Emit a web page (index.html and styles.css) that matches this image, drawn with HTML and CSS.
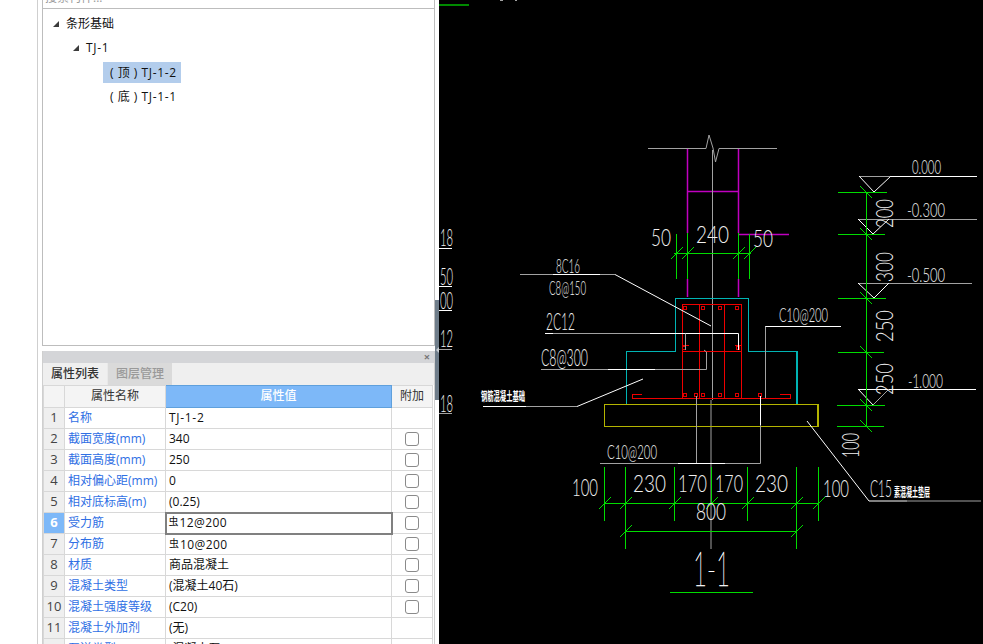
FILE: index.html
```html
<!DOCTYPE html>
<html lang="zh-CN">
<head>
<meta charset="utf-8">
<title>条形基础</title>
<link rel="stylesheet" href="styles.css">
</head>
<body>
<div class="app">
  <div class="gutter"></div>
  <div class="side">
    <section class="tree-pane">
      <div class="search">
        <span class="search-text">搜索构件...</span>
        <svg class="search-icon" width="12" height="12" viewBox="0 0 12 12"><circle cx="5" cy="0" r="4" fill="none" stroke="#3d8fd0" stroke-width="1.5"/><path d="M8 3l3 2" stroke="#3d8fd0" stroke-width="1.5"/></svg>
      </div>
      <ul class="tree">
        <li class="node lvl1"><span class="caret"></span>条形基础</li>
        <li class="node lvl2"><span class="caret"></span><span class="code">TJ-1</span></li>
        <li class="node lvl3"><span class="leaf selected">( 顶 ) <span class="code">TJ-1-2</span></span></li>
        <li class="node lvl3"><span class="leaf">( 底 ) <span class="code">TJ-1-1</span></span></li>
      </ul>
    </section>
    <section class="prop-pane">
      <div class="titlebar"><span class="close">×</span></div>
      <div class="tabs">
        <span class="tab active">属性列表</span>
        <span class="tab">图层管理</span>
      </div>
      <table class="props">
        <colgroup><col class="c-num"><col class="c-name"><col class="c-val"><col class="c-add"></colgroup>
        <thead>
          <tr><th></th><th>属性名称</th><th class="hot">属性值</th><th>附加</th></tr>
        </thead>
        <tbody>
          <tr><td class="num">1</td><td class="name">名称</td><td class="val"><span class="code">TJ-1-2</span></td><td></td></tr>
          <tr><td class="num">2</td><td class="name">截面宽度(mm)</td><td class="val">340</td><td class="add"><span class="check"></span></td></tr>
          <tr><td class="num">3</td><td class="name">截面高度(mm)</td><td class="val">250</td><td class="add"><span class="check"></span></td></tr>
          <tr><td class="num">4</td><td class="name">相对偏心距(mm)</td><td class="val">0</td><td class="add"><span class="check"></span></td></tr>
          <tr><td class="num">5</td><td class="name">相对底标高(m)</td><td class="val">(0.25)</td><td class="add"><span class="check"></span></td></tr>
          <tr><td class="num cur">6</td><td class="name">受力筋</td><td class="val editing"><span class="bar">虫</span><span class="spec">12@200</span></td><td class="add"><span class="check"></span></td></tr>
          <tr><td class="num">7</td><td class="name">分布筋</td><td class="val"><span class="bar">虫</span><span class="spec">10@200</span></td><td class="add"><span class="check"></span></td></tr>
          <tr><td class="num">8</td><td class="name">材质</td><td class="val">商品混凝土</td><td class="add"><span class="check"></span></td></tr>
          <tr><td class="num">9</td><td class="name">混凝土类型</td><td class="val">(混凝土40石)</td><td class="add"><span class="check"></span></td></tr>
          <tr><td class="num">10</td><td class="name">混凝土强度等级</td><td class="val">(C20)</td><td class="add"><span class="check"></span></td></tr>
          <tr><td class="num">11</td><td class="name">混凝土外加剂</td><td class="val">(无)</td><td></td></tr>
          <tr><td class="num">12</td><td class="name">泵送类型</td><td class="val">(混凝土泵)</td><td></td></tr>
        </tbody>
      </table>
    </section>
  </div>
  <div class="splitter"><div class="thumb"><span class="arrow"></span></div></div>
  <svg class="cad" width="544" height="644" viewBox="439 0 544 644">
    <defs>
      <path id="t" d="M-6 6L6-6"/>
      <circle id="d" r="2"/>
    </defs>

    <path class="dg" d="M439 5H469"/>
    <path class="g" d="M500 0.5H503M515 0.5H517"/>

    <!-- left edge labels -->
    <text class="dim" lengthAdjust="spacingAndGlyphs" x="440" y="246" textLength="13">18</text><path class="w" d="M439 248.5H452"/>
    <text class="dim" lengthAdjust="spacingAndGlyphs" x="440" y="285" textLength="13">50</text><path class="w" d="M439 286.5H452"/>
    <text class="dim" lengthAdjust="spacingAndGlyphs" x="440" y="309" textLength="13">00</text><path class="w" d="M439 310.5H452"/>
    <text class="dim" lengthAdjust="spacingAndGlyphs" x="440" y="347" textLength="13">12</text><path class="g" d="M439 349.5H452"/>
    <text class="dim" lengthAdjust="spacingAndGlyphs" x="440" y="412" textLength="13">18</text><path class="g" d="M439 413.5H452"/>

    <!-- wall -->
    <path class="m" d="M687.500 148V233M738.500 148V233M687.500 191.500H738.500M738.500 234.500H789M687.500 279V297M738.500 279V297"/>
    <path class="g" d="M648 148.500H706L709 135L713 148L715.500 162L719 148.500H777"/>
    <path class="g" d="M712.500 150V400M711 400V549"/>

    <!-- wall dimension -->
    <path class="gr" d="M676.500 234V279M687.500 233V279M738.500 233V279M749.500 234V279M674 253.500H751"/>
    <g class="gr"><use href="#t" x="676.500" y="253.500"/><use href="#t" x="687.500" y="253.500"/><use href="#t" x="738.500" y="253.500"/><use href="#t" x="749.500" y="253.500"/></g>
    <text class="dim" lengthAdjust="spacingAndGlyphs" x="651" y="246" textLength="20">50</text>
    <text class="dim" lengthAdjust="spacingAndGlyphs" x="696" y="243" textLength="33">240</text>
    <text class="dim" lengthAdjust="spacingAndGlyphs" x="753" y="247" textLength="20">50</text>

    <!-- footing -->
    <path class="y" d="M604.500 404.500H818V426.500H604.500Z"/>
    <path class="c" d="M626.500 404V351.500H675.500V298.500H748.500V351.500H797V404"/>
    <path class="r" d="M682.500 304.500H741.500V398.500H682.500ZM699.500 304.500V398M724.500 304.500V398M682.500 351.500H741.500M642 394.500H632.500V398.500H790.500V394.500H780M683 345.500H689M735 345.500H742"/>
    <g class="rd">
      <use href="#d" x="685" y="308"/><use href="#d" x="703" y="308"/><use href="#d" x="720" y="308"/><use href="#d" x="737" y="308"/>
      <use href="#d" x="685" y="395"/><use href="#d" x="696" y="395"/><use href="#d" x="703" y="395"/><use href="#d" x="720" y="395"/><use href="#d" x="737" y="395"/><use href="#d" x="760" y="395"/>
      <use href="#d" x="684" y="348"/><use href="#d" x="738" y="348"/>
    </g>

    <!-- leaders -->
    <path class="g" d="M520 274.500H553"/><path class="w" d="M553 274.500H600"/><path class="g" d="M600 274.500H615"/>
    <path class="w" d="M615 274.500L711 326"/>
    <text class="small" lengthAdjust="spacingAndGlyphs" x="556" y="273" textLength="24">8C16</text>
    <text class="small" lengthAdjust="spacingAndGlyphs" x="549" y="295" textLength="37">C8@150</text>

    <path class="w" d="M545 333.500H553"/><path class="g" d="M553 333.500H650"/><path class="w" d="M650 333.500H738.500V350"/><path class="g" d="M685.500 333.500V350"/>
    <text class="dim" lengthAdjust="spacingAndGlyphs" x="546" y="330" textLength="29">2C12</text>

    <path class="g" d="M541 369.500H608"/><path class="w" d="M608 369.500H655"/><path class="g" d="M655 369.500H706.500V352L704 350"/>
    <text class="dim" lengthAdjust="spacingAndGlyphs" x="541" y="366" textLength="47">C8@300</text>

    <path class="w" d="M483 406.500H526"/><path class="g" d="M526 406.500H577"/><path class="w" d="M577 406.500L643 379"/>
    <text class="tiny" lengthAdjust="spacingAndGlyphs" x="481" y="401" textLength="44">钢筋混凝土基础</text>

    <path class="w" d="M765 326.500H841"/><path class="g" d="M765.500 326.500V398"/>
    <text class="small" lengthAdjust="spacingAndGlyphs" x="779" y="322" textLength="49">C10@200</text>

    <path class="g" d="M600 463.500H678"/><path class="w" d="M678 463.500H725"/><path class="g" d="M725 463.500H760.500V396M696.500 396V463"/><path class="w" d="M760.500 396V425"/>
    <text class="small big" lengthAdjust="spacingAndGlyphs" x="607" y="459" textLength="50">C10@200</text>

    <path class="w" d="M807 421L869 501H907"/><path class="g" d="M907 501H981"/>
    <text class="dim" lengthAdjust="spacingAndGlyphs" x="870" y="497" textLength="22">C15</text>
    <text class="tiny" lengthAdjust="spacingAndGlyphs" x="894" y="497" textLength="36">素混凝土垫层</text>

    <!-- bottom dimensions -->
    <path class="gr" d="M604.500 467V521M625.500 467V549M674.500 467V521M711.500 467V505M747.500 467V521M796.500 467V549M818.500 467V521M604 503.500H818M625 531.500H797"/>
    <g class="gr">
      <use href="#t" x="604.500" y="503.500"/><use href="#t" x="625.500" y="503.500"/><use href="#t" x="674.500" y="503.500"/><use href="#t" x="711.500" y="503.500"/><use href="#t" x="747.500" y="503.500"/><use href="#t" x="796.500" y="503.500"/><use href="#t" x="818.500" y="503.500"/>
      <use href="#t" x="625.500" y="531.500"/><use href="#t" x="796.500" y="531.500"/>
    </g>
    <text class="dim" lengthAdjust="spacingAndGlyphs" x="572" y="496" textLength="26">100</text>
    <text class="dim" lengthAdjust="spacingAndGlyphs" x="633" y="492" textLength="33">230</text>
    <text class="dim" lengthAdjust="spacingAndGlyphs" x="678" y="492" textLength="29">170</text>
    <text class="dim" lengthAdjust="spacingAndGlyphs" x="715" y="492" textLength="28">170</text>
    <text class="dim" lengthAdjust="spacingAndGlyphs" x="755" y="492" textLength="33">230</text>
    <text class="dim" lengthAdjust="spacingAndGlyphs" x="823" y="497" textLength="26">100</text>
    <text class="dim" lengthAdjust="spacingAndGlyphs" x="696" y="520" textLength="30">800</text>
    <text class="title" lengthAdjust="spacingAndGlyphs" x="693" y="586" textLength="37">1-1</text>
    <path class="gr" d="M670 592.500H753"/>

    <!-- elevation marks -->
    <path class="g" d="M859 176.500H891"/><path class="w" d="M859 176L874 192L891 176M891 176.500H977"/>
    <path class="g" d="M858 219.500H977"/><path class="w" d="M858 219L873 234L889 219"/>
    <path class="g" d="M858 283.500H972"/><path class="w" d="M858 283L874 298L889 283"/>
    <path class="w" d="M858 389.500H976M858 389L873 405"/><path class="g" d="M873 405L889 389"/>
    <text class="small" lengthAdjust="spacingAndGlyphs" x="912" y="174" textLength="29">0.000</text>
    <text class="small" lengthAdjust="spacingAndGlyphs" x="907" y="217" textLength="38">-0.300</text>
    <text class="small" lengthAdjust="spacingAndGlyphs" x="907" y="282" textLength="38">-0.500</text>
    <text class="small" lengthAdjust="spacingAndGlyphs" x="908" y="388" textLength="35">-1.000</text>

    <path class="gr" d="M866.500 192V426M838 192.500H887M838 234.500H885M838 298.500H886M838 352.500H884M837 405.500H885M837 426.500H884"/>
    <g class="gr">
      <use href="#t" x="866" y="192" transform="rotate(90 866 192)"/><use href="#t" x="866" y="234" transform="rotate(90 866 234)"/><use href="#t" x="866" y="298" transform="rotate(90 866 298)"/><use href="#t" x="866" y="352" transform="rotate(90 866 352)"/><use href="#t" x="866" y="405" transform="rotate(90 866 405)"/><use href="#t" x="866" y="426" transform="rotate(90 866 426)"/>
    </g>
    <text class="dim" lengthAdjust="spacingAndGlyphs" x="893" y="228" textLength="29" transform="rotate(-90 893 228)">200</text>
    <text class="dim" lengthAdjust="spacingAndGlyphs" x="893" y="282" textLength="30" transform="rotate(-90 893 282)">300</text>
    <text class="dim" lengthAdjust="spacingAndGlyphs" x="893" y="342" textLength="32" transform="rotate(-90 893 342)">250</text>
    <text class="dim" lengthAdjust="spacingAndGlyphs" x="893" y="395" textLength="32" transform="rotate(-90 893 395)">250</text>
    <text class="dim" lengthAdjust="spacingAndGlyphs" x="859" y="458" textLength="25" transform="rotate(-90 859 458)">100</text>
  </svg>
</div>
</body>
</html>
```

FILE: styles.css
```css
* { box-sizing: border-box; }
html, body { margin: 0; padding: 0; height: 100%; overflow: hidden; background: #fff; }
body { font: 12px/1.2 "Open Sans", "Noto Sans CJK SC", sans-serif; color: #111; }

.app { display: flex; width: 983px; height: 644px; overflow: hidden; }
.gutter { width: 38px; flex: none; border-right: 1px solid #cfcfcf; }

.side { width: 397px; flex: none; padding-left: 4px; display: flex; flex-direction: column; gap: 5px; }

.tree-pane { height: 346px; flex: none; border: 1px solid #bdbdbd; border-top: 0; background: #fff; }
.search { height: 9px; overflow: hidden; display: flex; justify-content: space-between; align-items: flex-end; padding: 0 7px 3px 2px; border-bottom: 1px solid #bdbdbd; }
.search-text { color: #9a9a9a; flex: none; line-height: 14px; }
.search-icon { flex: none; }
.tree { list-style: none; margin: 0; padding: 3px 0 0; }
.node { height: 24px; display: flex; align-items: center; }
.lvl1 { padding-left: 10px; }
.lvl2 { padding-left: 30px; }
.lvl3 { padding-left: 60px; }
.caret { width: 0; height: 0; margin-right: 7px; border-style: solid; border-width: 0 0 6px 6px; border-color: transparent transparent #3c3c3c transparent; }
.leaf { height: 21px; line-height: 21px; padding: 0 4px 0 7px; color: #111; word-spacing: 1px; }
.selected { background: #b3cdec; }
.code { letter-spacing: .7px; }

.prop-pane { flex: 1; min-height: 0; overflow: hidden; border: 1px solid #cfcfcf; border-width: 0 1px 0 1px; background: #fff; }
.titlebar { height: 12px; background: #d4d5d8; display: flex; justify-content: flex-end; align-items: center; padding-right: 4px; }
.close { color: #777; font-size: 11px; line-height: 12px; font-weight: 700; }
.tabs { height: 22px; display: flex; background: #efefef; }
.tab { width: 65px; display: flex; align-items: center; justify-content: center; background: #dadada; color: #999; border-left: 1px solid #e9e9e9; font-weight: 500; }
.tab.active { width: 64px; background: #efefef; color: #333; border-left: 0; }

.props { border-collapse: collapse; table-layout: fixed; width: 389px; }
.c-num { width: 21px; }
.c-name { width: 101px; }
.c-val { width: 226px; }
.c-add { width: 41px; }
.props th, .props td { height: 21px; padding: 0; border: 1px solid #d8d8d8; white-space: nowrap; overflow: hidden; }
.props th { height: 22px; background: #f4f4f4; font-weight: 400; color: #333; text-align: center; }
.props th.hot { background: #7db8f8; color: #fff; border-color: #5fa0dc; font-weight: 500; }
.num { background: #efefef; text-align: center; color: #444; font-size: 13px; }
.num.cur { background: #7db8f8; color: #fff; font-weight: 700; }
.name { color: #2f6fe4; padding-left: 3px !important; }
.val { padding-left: 3px !important; color: #111; }
.props td.editing { border: 2px solid #808080; padding-left: 2px !important; }
.bar { font-size: 10px; vertical-align: 2px; margin-right: 1px; }
.spec { letter-spacing: .4px; }
.add { text-align: center; font-size: 0; line-height: 0; }
.check { display: inline-block; width: 14px; height: 14px; border: 1px solid #8a8a8a; border-radius: 3px; background: #fff; vertical-align: middle; }

.splitter { width: 4px; flex: none; padding-top: 300px; background: #fff; }
.thumb { height: 100px; background: #6f7d8a; display: flex; align-items: center; }
.arrow { width: 0; height: 0; margin-left: 1px; border-style: solid; border-width: 3px 3px 3px 0; border-color: transparent #c9ced3 transparent transparent; }

.cad { flex: none; display: block; background: #000; }
.cad path, .cad use { fill: none; shape-rendering: crispEdges; }
.cad .w { stroke: #fff; stroke-width: 1; shape-rendering: auto; }
.cad .g { stroke: #a2a2a2; stroke-width: 1; shape-rendering: auto; }
.cad .dg { stroke: #008a00; stroke-width: 2; }
.cad .gr { stroke: #00dc00; stroke-width: 1; }
.cad .m { stroke: #c000c0; stroke-width: 1.5; shape-rendering: auto; }
.cad .c { stroke: #00b4b4; stroke-width: 1.5; }
.cad .y { stroke: #b4b400; stroke-width: 1.5; }
.cad .r { stroke: #ee0000; stroke-width: 1; }
.cad .rd { fill: none; stroke: #e00000; stroke-width: 1; }
.cad text { fill: #f0f0f0; font-family: "Lato", "Liberation Sans", sans-serif; font-weight: 300; }
.cad .dim { font-size: 23px; }
.cad .small { font-size: 19px; }
.cad .big { font-size: 20px; }
.cad .title { font-size: 47px; font-weight: 100; fill: #fff; stroke: #fff; stroke-width: .5; }
.cad .tiny { font-family: "Noto Sans CJK SC", sans-serif; font-size: 12px; font-weight: 700; fill: #fff; }
```
